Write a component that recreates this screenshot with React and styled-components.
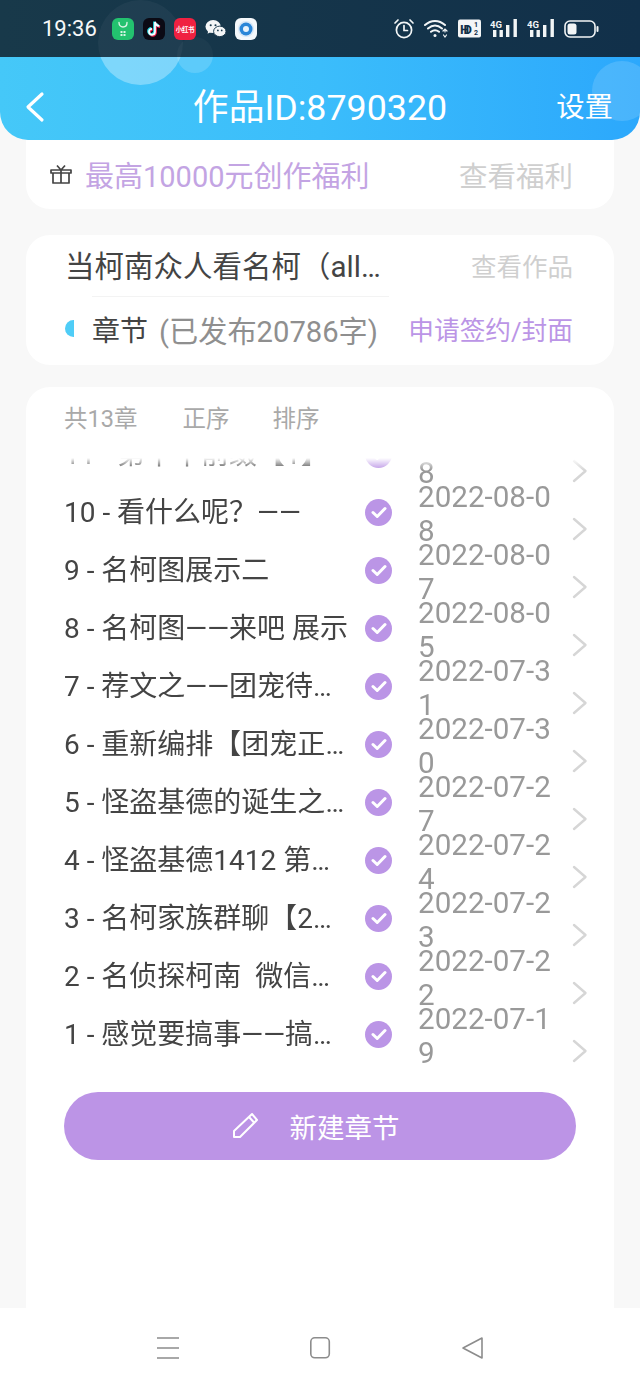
import React from "react";
import styled, { createGlobalStyle } from "styled-components";

const Global = createGlobalStyle`
  html, body { margin: 0; padding: 0; width: 640px; height: 1387px; overflow: hidden; background: #f8f8f8; }
  body { font-family: Roboto, "Noto Sans CJK SC", sans-serif; }
  * { box-sizing: border-box; }
`;

const Page = styled.div`
  width: 640px; height: 1387px; display: flex; flex-direction: column; background: #f8f8f8; overflow: hidden;
`;
const StatusBar = styled.div`
  position: relative; z-index: 3; flex: none; height: 57px; overflow: hidden;
  display: flex; align-items: center; justify-content: space-between; padding: 0 41px 0 42px;
  background: linear-gradient(90deg, #18394a, #11304a);
`;
const Bubble = styled.i`
  position: absolute; border-radius: 50%; pointer-events: none;
  left: ${p => p.$x}px; top: ${p => p.$y}px; width: ${p => p.$d}px; height: ${p => p.$d}px;
  background: rgba(255,255,255,${p => p.$a});
`;
const StatusLeft = styled.div`position: relative; display: flex; align-items: center; gap: 9px;`;
const Clock = styled.span`color: #f6f8f9; font-size: 22px; font-weight: 400; width: 61px; white-space: nowrap;`;
const StatusRight = styled.div`position: relative; display: flex; align-items: center; gap: 9px;`;
const AppIcon = styled.div`
  width: 22px; height: 22px; border-radius: 6px; background: ${p => p.$bg};
  display: flex; align-items: center; justify-content: center; overflow: hidden;
`;
const RedLabel = styled.span`color: #fff; font-size: 6.5px; font-weight: 700; white-space: nowrap; letter-spacing: -.4px;`;
const Header = styled.header`
  position: relative; z-index: 2; flex: none; height: 83px; overflow: hidden; padding-top: 17px;
  display: grid; grid-template-columns: 90px 1fr 90px; align-items: center; color: #fff;
  background: linear-gradient(90deg, #45c8f8, #3bbdfb 50%, #2ca8fc);
  border-radius: 0 0 28px 28px;
`;
const Back = styled.div`display: flex; padding-left: 25px; position: relative;`;
const Title = styled.h1`
  position: relative; margin: 3px 0 0; font-size: 35.8px; font-weight: 400; text-align: center; white-space: nowrap; line-height: 1;
`;
const Setting = styled.div`position: relative; margin-top: 3px; font-size: 28.4px; text-align: right; padding-right: 27px; white-space: nowrap; line-height: 1;`;
const Content = styled.main`flex: 1; min-height: 0; display: flex; flex-direction: column; padding: 0 26px; overflow: hidden;`;
const Card = styled.section`background: #fff; border-radius: 24px;`;
const PromoCard = styled(Card)`
  margin-top: -24px; height: 93px; padding: 24px 41px 1px 24px;
  display: flex; align-items: center; gap: 13px;
`;
const PromoText = styled.span`flex: 1; color: #c3a4e3; font-size: 29px; white-space: nowrap;`;
const PromoLink = styled.span`color: #cfcfcf; font-size: 28.5px; white-space: nowrap;`;
const WorkCard = styled(Card)`margin-top: 26px; height: 130px; padding: 0 41px 0 39px;`;
const WorkTop = styled.div`
  height: 62px; padding-bottom: 4px; display: flex; align-items: center; justify-content: space-between; position: relative;
  &::after { content: ""; position: absolute; left: 27px; right: 184px; bottom: 0; height: 1px; background: #f3f3f3; }
`;
const WorkTitle = styled.span`width: 317px; font-size: 29.5px; color: #444; white-space: nowrap; overflow: hidden; text-overflow: ellipsis;`;
const WorkLink = styled.span`color: #cfcfcf; font-size: 25.5px; white-space: nowrap;`;
const WorkBottom = styled.div`height: 68px; display: flex; align-items: center; padding-bottom: 5px;`;
const HalfDot = styled.i`width: 9px; height: 17px; background: #4fcdf7; border-radius: 9px 0 0 9px; margin-right: 18px;`;
const ChapterLabel = styled.span`font-size: 28px; color: #444; margin-right: 11px; white-space: nowrap;`;
const ChapterCount = styled.span`flex: 1; font-size: 29.2px; color: #8f8f8f; white-space: nowrap;`;
const Apply = styled.span`color: #bb95e6; font-size: 25.7px; white-space: nowrap;`;
const ListCard = styled(Card)`
  margin-top: 22px; flex: 1; min-height: 0; padding: 0 38px; border-radius: 24px 24px 0 0;
  display: flex; flex-direction: column;
`;
const ListHead = styled.div`flex: none; height: 71px; padding-bottom: 12px; display: flex; align-items: center; color: #a9a9a9; font-size: 23.5px;`;
const Tab = styled.span`margin-right: ${p => p.$gap}px; white-space: nowrap;`;
const List = styled.div`
  flex: none; height: 605px; overflow: hidden; display: flex; flex-direction: column; justify-content: flex-end;
  -webkit-mask-image: linear-gradient(180deg, transparent 0, #000 12px);
  mask-image: linear-gradient(180deg, transparent 0, #000 12px);
  margin-right: -14px;
`;
const Row = styled.div`flex: none; height: 58px; display: flex; align-items: center;`;
const Name = styled.span`
  flex: none; width: 287px; font-size: 28px; line-height: 34px; color: #444; white-space: pre; overflow: hidden; text-overflow: ellipsis; margin-top: 1px;
`;
const Check = styled.div`
  flex: none; margin-left: 14px; width: 27px; height: 27px; border-radius: 50%; background: #bb95e6;
  display: flex; align-items: center; justify-content: center;
`;
const DateText = styled.span`
  flex: none; margin-left: 26px; width: 136px; font-size: 29.6px; line-height: 34px; color: #999; word-break: break-all; margin-top: 4px;
`;
const Chevron = styled.div`flex: none; display: flex; margin-left: 18px; margin-top: 34px;`;
const NewButton = styled.button`
  flex: none; margin-top: 29px; height: 68px; border: 0; border-radius: 34px; background: #bc94e6; color: #fff;
  font: 400 27.5px Roboto, "Noto Sans CJK SC", sans-serif;
  display: flex; align-items: center; justify-content: center; gap: 31px; padding: 0 10px 0 0;
`;
const NavBar = styled.nav`flex: none; height: 79px; background: #fff; display: grid; grid-template-columns: repeat(3, 152.5px); justify-content: center; padding-top: 28px;`;
const NavSlot = styled.div`display: flex; justify-content: center; align-items: flex-start;`;

const rows = [
  ["11 - 第十十前缀【1】", "2022-08-08"],
  ["10 - 看什么呢？——", "2022-08-08"],
  ["9 - 名柯图展示二", "2022-08-07"],
  ["8 - 名柯图——来吧 展示", "2022-08-05"],
  ["7 - 荐文之——团宠待发布的内容", "2022-07-31"],
  ["6 - 重新编排【团宠正文的内容", "2022-07-30"],
  ["5 - 怪盗基德的诞生之谜的内容", "2022-07-27"],
  ["4 - 怪盗基德1412 第一次的内容", "2022-07-24"],
  ["3 - 名柯家族群聊【2】的内容啊", "2022-07-23"],
  ["2 - 名侦探柯南  微信群聊的内容", "2022-07-22"],
  ["1 - 感觉要搞事——搞事情的内容", "2022-07-19"],
];

const Tick = () => (
  <svg width="16" height="13" viewBox="0 0 16 13"><path d="M2 6.5l4.2 4L14 2.5" fill="none" stroke="#fff" strokeWidth="3" strokeLinecap="round" strokeLinejoin="round" /></svg>
);
const RowChevron = () => (
  <svg width="16" height="24" viewBox="0 0 16 24"><path d="M2 2l11.5 10L2 22" fill="none" stroke="#d6d6d6" strokeWidth="2.4" strokeLinecap="round" strokeLinejoin="round" /></svg>
);
const Signal = () => (
  <svg width="28" height="20" viewBox="0 0 28 20" fill="#f2f5f6">
    <text x="0" y="8.5" fontSize="9.5" fontWeight="700" fontFamily="Roboto">4G</text>
    <rect x="3" y="11" width="3.4" height="7" /><rect x="9.500" y="11" width="3.4" height="7" /><rect x="16" y="6" width="3.4" height="12" /><rect x="23.500" y="0" width="3.4" height="18" />
  </svg>
);

export default function App() {
  return (
    <Page>
      <Global />
      <StatusBar>
        <Bubble $x={98} $y={0} $d={85} $a={0.04} />
        <Bubble $x={177} $y={37} $d={36} $a={0.03} />
        <StatusLeft>
          <Clock>19:36</Clock>
          <AppIcon $bg="#23c26f">
            <svg width="14" height="16" viewBox="0 0 14 16" fill="none"><path d="M3 1.5c0 3 2 4.5 4 4.5s4-1.500 4-4.500" stroke="#d8f5e4" strokeWidth="1.400" strokeLinecap="round" /><path d="M4.500 10h2v2h-2zM7.500 10h2v2h-2zM4.500 13h2v2h-2zM7.500 13h2v2h-2z" fill="#d8f5e4" /></svg>
          </AppIcon>
          <AppIcon $bg="#0b0a14">
            <svg width="16" height="18" viewBox="0 0 16 18" fill="none">
              <path d="M9 2v9.800a3 3 0 1 1-3-3M9 2c.4 2.400 2 3.800 4.400 4" stroke="#f0254f" strokeWidth="2.400" transform="translate(.7 .7)" />
              <path d="M9 2v9.800a3 3 0 1 1-3-3M9 2c.4 2.400 2 3.800 4.400 4" stroke="#2ad6df" strokeWidth="2.400" transform="translate(-.7 -.5)" />
              <path d="M9 2v9.800a3 3 0 1 1-3-3M9 2c.4 2.400 2 3.800 4.400 4" stroke="#fff" strokeWidth="1.700" />
            </svg>
          </AppIcon>
          <AppIcon $bg="#f02141"><RedLabel>小红书</RedLabel></AppIcon>
          <svg width="21" height="20" viewBox="0 0 22 20" fill="#f4f6f7">
            <ellipse cx="8.500" cy="7.500" rx="8" ry="6.800" />
            <path d="M3.500 11.500l-.8 3.500 3.800-2.200z" />
            <ellipse cx="15.500" cy="12.500" rx="6.500" ry="5.500" stroke="#17374a" strokeWidth="1" />
            <circle cx="6" cy="6" r="1.100" fill="#17374a" /><circle cx="11" cy="6" r="1.100" fill="#17374a" />
            <circle cx="13.500" cy="11.500" r=".9" fill="#17374a" /><circle cx="17.500" cy="11.500" r=".9" fill="#17374a" />
          </svg>
          <AppIcon $bg="#f5f8fb">
            <svg width="18" height="18" viewBox="0 0 18 18"><circle cx="9" cy="9" r="8" fill="#d7e7f7" /><circle cx="9" cy="9" r="6.500" fill="#2a86d8" /><circle cx="9" cy="9" r="3" fill="#e8f3fc" /></svg>
          </AppIcon>
        </StatusLeft>
        <StatusRight>
          <svg width="22" height="22" viewBox="0 0 22 22" fill="none" stroke="#f2f5f6" strokeWidth="1.700" strokeLinecap="round">
            <circle cx="11" cy="12" r="7.600" /><path d="M11 7.500V12.500H14.500M2 5l3-3M20 5l-3-3" />
          </svg>
          <svg width="25" height="19" viewBox="0 0 25 19" fill="none" stroke="#f2f5f6" strokeWidth="2" strokeLinecap="round">
            <path d="M1 6c6-5.500 14-5.500 20 0M4 9.500c4.500-3.800 9.500-3.800 14 0M7 12.800c2.800-2.200 5.200-2.200 8 0" />
            <circle cx="11" cy="16.500" r="1.500" fill="#f2f5f6" stroke="none" />
            <path d="M21 10v3M23 12l-2-2-2 2M19.500 16l1.500 2 1.500-2" strokeWidth="1.200" />
          </svg>
          <svg width="23" height="19" viewBox="0 0 23 19">
            <rect width="23" height="18" y=".5" rx="2" fill="#f4f6f7" />
            <text x="2" y="14.500" fontSize="13" fontWeight="700" fontFamily="Roboto" fill="#12304a" textLength="12">HD</text>
            <text x="16" y="8" fontSize="7" fontWeight="700" fontFamily="Roboto" fill="#12304a">1</text>
            <text x="16" y="16" fontSize="7" fontWeight="700" fontFamily="Roboto" fill="#12304a">2</text>
          </svg>
          <Signal />
          <Signal />
          <svg width="35" height="20" viewBox="0 0 35 20">
            <rect x="1" y="2" width="30" height="16" rx="5" fill="none" stroke="#f2f5f6" strokeWidth="1.600" />
            <rect x="3.500" y="4.500" width="9" height="11" rx="2.500" fill="#f2f5f6" />
            <rect x="32.500" y="7" width="2" height="6" rx="1" fill="#f2f5f6" />
          </svg>
        </StatusRight>
      </StatusBar>
      <Header>
        <Bubble $x={98} $y={-57} $d={85} $a={0.32} />
        <Bubble $x={177} $y={-20} $d={36} $a={0.16} />
        <Bubble $x={592} $y={4} $d={60} $a={0.14} />
        <Back>
          <svg width="20" height="32" viewBox="0 0 20 32"><path d="M17 3L3 16l14 13" fill="none" stroke="#fff" strokeWidth="3.200" strokeLinecap="round" strokeLinejoin="round" /></svg>
        </Back>
        <Title>作品ID:8790320</Title>
        <Setting>设置</Setting>
      </Header>
      <Content>
        <PromoCard>
          <svg width="22" height="22" viewBox="0 0 22 22" fill="none" stroke="#444" strokeWidth="1.700" strokeLinejoin="round">
            <path d="M1 7h20v3H1zM3 10v10h16V10M11 7v13M7 2.500L11 7l4-4.500" />
          </svg>
          <PromoText>最高10000元创作福利</PromoText>
          <PromoLink>查看福利</PromoLink>
        </PromoCard>
        <WorkCard>
          <WorkTop>
            <WorkTitle>当柯南众人看名柯（allxxxxxxxx）</WorkTitle>
            <WorkLink>查看作品</WorkLink>
          </WorkTop>
          <WorkBottom>
            <HalfDot />
            <ChapterLabel>章节</ChapterLabel>
            <ChapterCount>(已发布20786字)</ChapterCount>
            <Apply>申请签约/封面</Apply>
          </WorkBottom>
        </WorkCard>
        <ListCard>
          <ListHead>
            <Tab $gap={45}>共13章</Tab>
            <Tab $gap={43}>正序</Tab>
            <Tab $gap={0}>排序</Tab>
          </ListHead>
          <List>
            {rows.map(([name, date]) => (
              <Row key={name}>
                <Name>{name}</Name>
                <Check><Tick /></Check>
                <DateText>{date}</DateText>
                <Chevron><RowChevron /></Chevron>
              </Row>
            ))}
          </List>
          <NewButton>
            <svg width="28" height="28" viewBox="0 0 28 28" fill="none" stroke="#fff" strokeWidth="2" strokeLinejoin="round">
              <path d="M3 25h6L26 8l-5-6L3 19zM18 5l5.500 6" />
            </svg>
            新建章节
          </NewButton>
        </ListCard>
      </Content>
      <NavBar>
        <NavSlot>
          <svg width="24" height="24" viewBox="0 0 24 24" stroke="#8c8c8c" strokeWidth="1.600"><path d="M1 2h22M1 12h22M1 22h22" /></svg>
        </NavSlot>
        <NavSlot>
          <svg width="24" height="24" viewBox="0 0 24 24" fill="none" stroke="#8c8c8c" strokeWidth="1.600"><rect x="2.800" y="1.800" width="18.500" height="20" rx="4" /></svg>
        </NavSlot>
        <NavSlot>
          <svg width="24" height="24" viewBox="0 0 24 24" fill="none" stroke="#8c8c8c" strokeWidth="1.600" strokeLinejoin="round"><path d="M21 2v20L2 12z" /></svg>
        </NavSlot>
      </NavBar>
    </Page>
  );
}
